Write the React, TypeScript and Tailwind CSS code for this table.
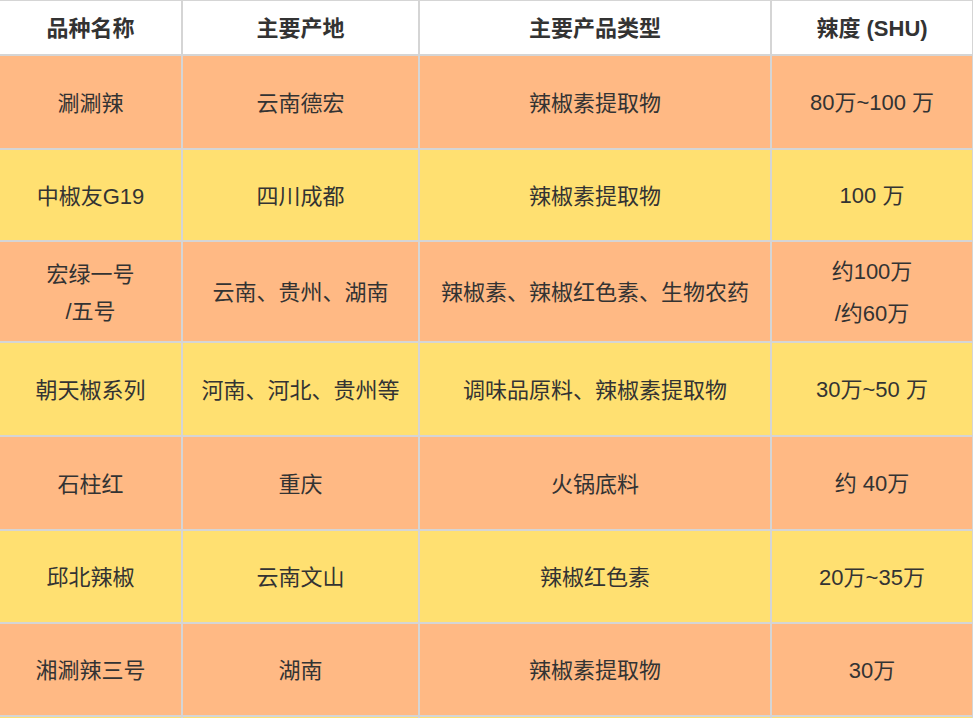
const rows: { name: string[]; origin: string; product: string; shu: string[]; tone: 'o' | 'y' }[] = [
  { name: ['涮涮辣'], origin: '云南德宏', product: '辣椒素提取物', shu: ['80万~100 万'], tone: 'o' },
  { name: ['中椒友G19'], origin: '四川成都', product: '辣椒素提取物', shu: ['100 万'], tone: 'y' },
  { name: ['宏绿一号', '/五号'], origin: '云南、贵州、湖南', product: '辣椒素、辣椒红色素、生物农药', shu: ['约100万', '/约60万'], tone: 'o' },
  { name: ['朝天椒系列'], origin: '河南、河北、贵州等', product: '调味品原料、辣椒素提取物', shu: ['30万~50 万'], tone: 'y' },
  { name: ['石柱红'], origin: '重庆', product: '火锅底料', shu: ['约 40万'], tone: 'o' },
  { name: ['邱北辣椒'], origin: '云南文山', product: '辣椒红色素', shu: ['20万~35万'], tone: 'y' },
  { name: ['湘涮辣三号'], origin: '湖南', product: '辣椒素提取物', shu: ['30万'], tone: 'o' },
  { name: [''], origin: '', product: '', shu: [''], tone: 'y' },
];

const font = { fontFamily: '"Liberation Sans", "Noto Sans CJK SC", sans-serif' };

function Cell({ lines, bg, leading }: { lines: string[]; bg: string; leading: string }) {
  return (
    <div className={`flex flex-col items-center justify-center pt-[2px] text-center text-[22px] text-[#333333] ${leading} ${bg}`}>
      {lines.map((l, i) => <span key={i}>{l}</span>)}
    </div>
  );
}

export default function App() {
  return (
    <div className="w-[973px] h-[718px] overflow-hidden bg-white" style={font}>
      <div className="grid grid-cols-[181px_235px_350px_200px] grid-rows-[53px_92px_90px_99px_92px_92px_91px_91px] gap-[2px] bg-[#d5d5d5] pt-[1px] pr-[1px] w-[973px]">
        {['品种名称', '主要产地', '主要产品类型', '辣度 (SHU)'].map(h => (
          <div key={h} className="flex items-center justify-center bg-white pt-[2px] text-[22px] font-bold text-[#333333]">
            {h}
          </div>
        ))}
        {rows.map((r, i) => {
          const bg = r.tone === 'o' ? 'bg-[#ffb984]' : 'bg-[#ffe071]';
          return [
            <Cell key={`a${i}`} lines={r.name} bg={bg} leading="leading-[37px]" />,
            <Cell key={`b${i}`} lines={[r.origin]} bg={bg} leading="leading-[37px]" />,
            <Cell key={`c${i}`} lines={[r.product]} bg={bg} leading="leading-[37px]" />,
            <Cell key={`d${i}`} lines={r.shu} bg={bg} leading="leading-[42px]" />,
          ];
        })}
      </div>
    </div>
  );
}
